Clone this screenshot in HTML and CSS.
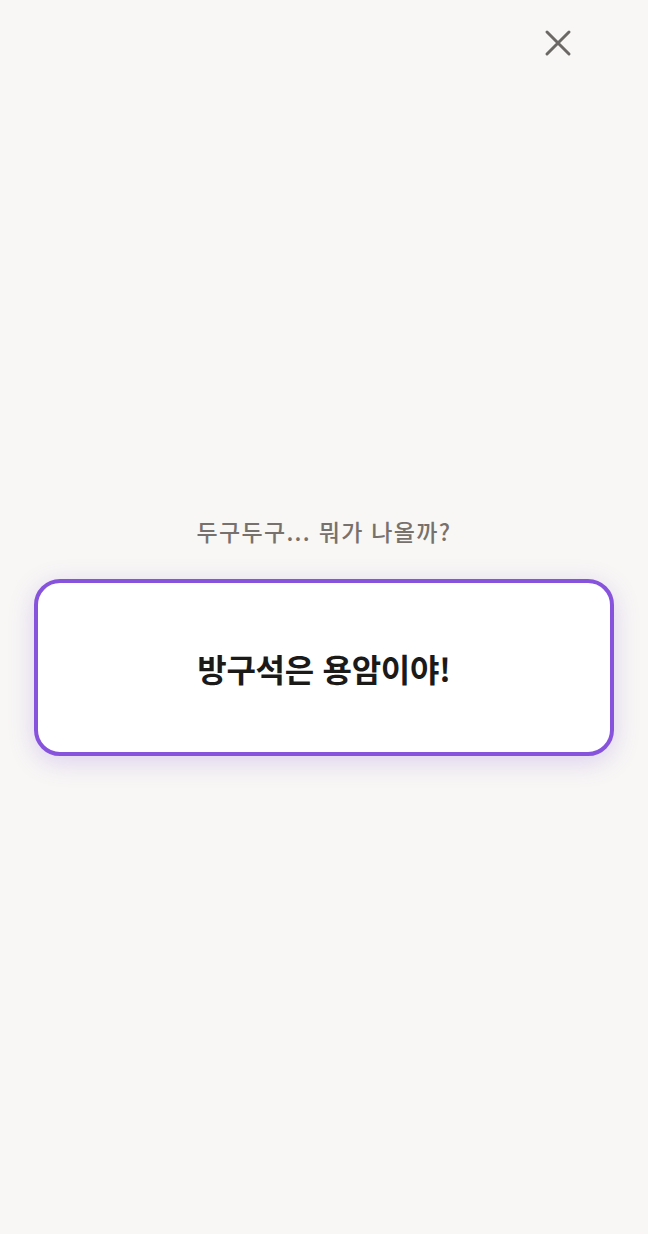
FILE: index.html
```html
<!DOCTYPE html>
<html lang="ko">
  <head>
    <meta charset="UTF-8" />
    <meta name="viewport" content="width=device-width, initial-scale=1.0" />
    <title>두구두구</title>
    <link rel="stylesheet" href="styles.css">
  </head>
  <body>
    <div class="screen">
      <header class="topbar">
        <button class="close-btn" aria-label="닫기">
          <svg width="28" height="28" viewBox="0 0 28 28">
            <path d="M3 3 L25 25 M25 3 L3 25" stroke="#6b6865" stroke-width="3" stroke-linecap="round" fill="none" />
          </svg>
        </button>
      </header>

      <main class="reveal">
        <p class="reveal-hint">두구두구... 뭐가 나올까?</p>
        <div class="result-card">
          <h1 class="result-title">방구석은 용암이야!</h1>
        </div>
      </main>
    </div>
  </body>
</html>
```

FILE: styles.css
```css
* {
  margin: 0;
  padding: 0;
  box-sizing: border-box;
}

body {
  background-color: #f8f7f5;
  font-family: "Noto Sans CJK KR", "Noto Sans", sans-serif;
}

.screen {
  min-height: 1234px;
  display: flex;
  flex-direction: column;
}

/* Top bar with close button */
.topbar {
  height: 86px;
  display: flex;
  justify-content: flex-end;
  align-items: center;
  padding-right: 76px;
}

.close-btn {
  width: 28px;
  height: 28px;
  border: none;
  background: none;
  display: flex;
  align-items: center;
  justify-content: center;
  cursor: pointer;
}

/* Reveal area */
.reveal {
  display: flex;
  flex-direction: column;
  align-items: center;
  padding: 430px 34px 0 34px;
}

.reveal-hint {
  font-size: 23px;
  line-height: 30px;
  font-weight: 500;
  color: #77716d;
  letter-spacing: 1.3px;
}

.result-card {
  margin-top: 33px;
  width: 100%;
  height: 177px;
  background-color: #fff;
  border: 4px solid #8753dc;
  border-radius: 26px;
  display: flex;
  align-items: center;
  justify-content: center;
  box-shadow: 0 6px 26px rgba(135, 83, 220, 0.24);
}

.result-title {
  font-size: 32px;
  line-height: 40px;
  font-weight: 700;
  color: #1b1a19;
  letter-spacing: -0.3px;
}
```
